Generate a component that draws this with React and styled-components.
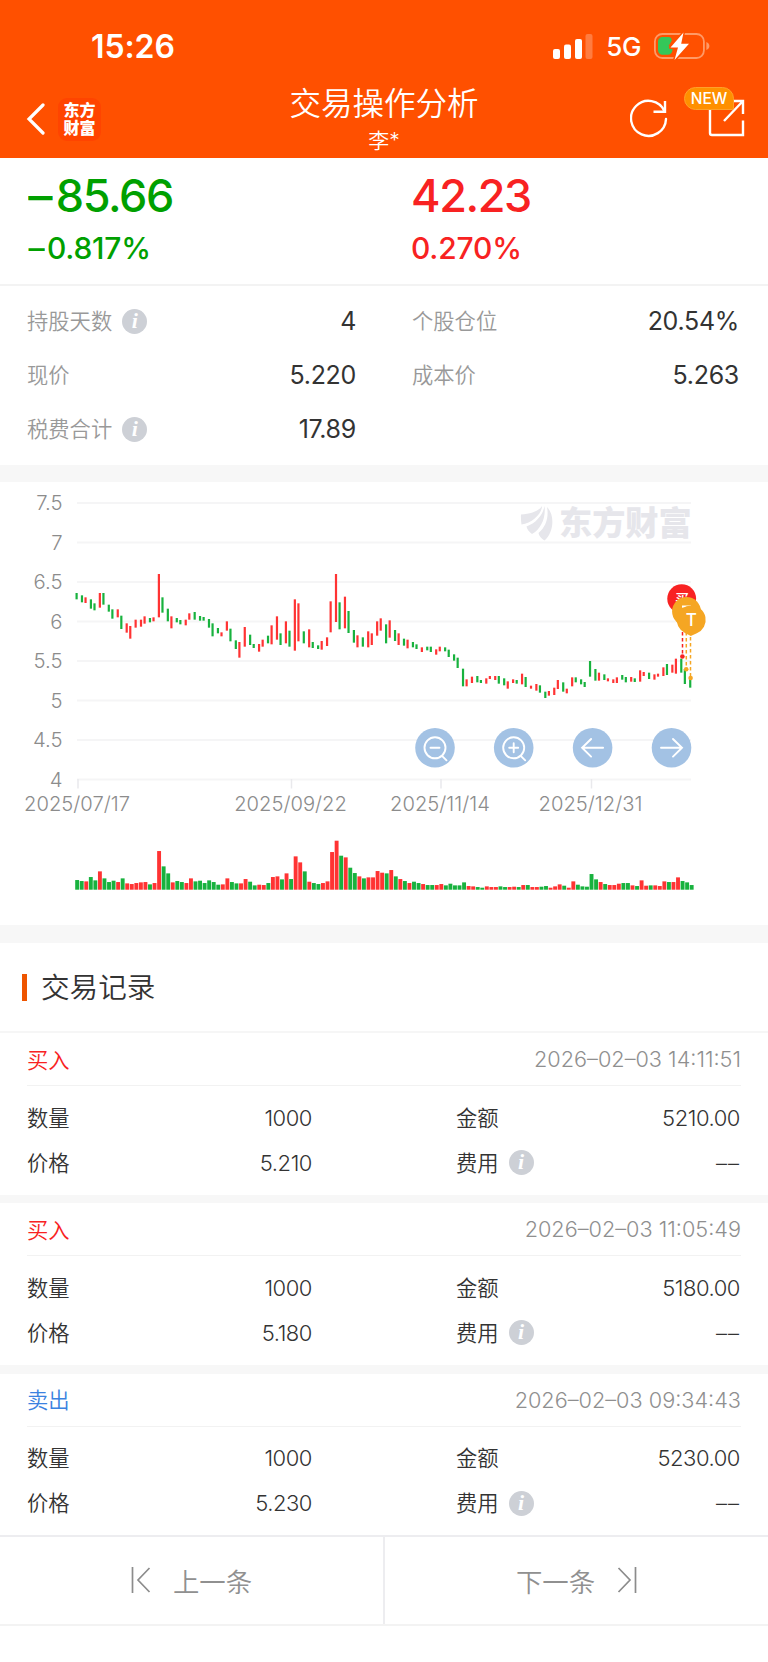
import React from 'react';
import styled, { createGlobalStyle } from 'styled-components';

const GlobalStyle = createGlobalStyle`
  * {
    box-sizing: border-box;
  }

  body {
    margin: 0;
    background: #fff;
    font-family: Inter, 'Noto Sans CJK SC', sans-serif;
    color: #333;
  }
`;

const Page = styled.div`
  width: 768px;
  height: 1662px;
  background: #fff;
  overflow: hidden;
`;

const Header = styled.header`
  height: 158px;
  background: #ff5000;
  color: #fff;
`;

const StatusBar = styled.div`
  height: 86px;
  padding: 6px 58px 0 91px;
  display: flex;
  align-items: center;
  justify-content: space-between;
`;

const Clock = styled.span`
  font-size: 32px;
  font-weight: 600;
  letter-spacing: -0.1px;
`;

const StatusIcons = styled.div`
  display: flex;
  align-items: center;
  gap: 13px;
`;

const Network = styled.span`
  font-size: 26px;
  font-weight: 500;
  letter-spacing: -0.4px;
  line-height: 30px;
  padding-top: 2px;
`;

const NavBar = styled.div`
  height: 72px;
  display: grid;
  grid-template-columns: 160px 1fr 160px;
`;

const NavLeft = styled.div`
  display: flex;
  align-items: center;
  gap: 13px;
  padding: 0 0 6px 26px;
`;

const AppBadge = styled.div`
  width: 43px;
  height: 43px;
  border-radius: 9px;
  background: #ff4400;
  display: flex;
  flex-wrap: wrap;
  align-content: center;
  justify-content: center;
  padding-bottom: 1px;
  font-size: 16px;
  font-weight: 900;
  line-height: 18px;
  text-align: center;
`;

const NavTitle = styled.div`
  display: flex;
  flex-direction: column;
  align-items: center;
`;

const Title = styled.h1`
  margin: 0;
  padding-top: 1px;
  font-size: 31.5px;
  font-weight: 350;
  line-height: 34px;
`;

const SubTitle = styled.div`
  font-size: 21px;
  font-weight: 350;
  line-height: 24px;
  margin-top: 8px;
`;

const NavRight = styled.div`
  display: flex;
  justify-content: flex-end;
  padding: 13px 23px 0 0;
  gap: 40px;
`;

const ShareButton = styled.div`
  position: relative;
`;

const NewBadge = styled.span`
  position: absolute;
  left: -24px;
  top: -12px;
  width: 50px;
  height: 23px;
  border-radius: 12px 12px 2px 12px;
  background: #ff9000;
  border: 1px solid #ffa02a;
  font-size: 15.5px;
  font-weight: 500;
  line-height: 22px;
  text-align: center;
`;

const ProfitPanel = styled.section`
  height: 126px;
  padding: 11px 0 0 27px;
  display: grid;
  grid-template-columns: 384px 1fr;
`;

const Profit = styled.div`
  color: ${props => (props.$up ? '#f82222' : '#00a000')};
  font-weight: 500;
`;

const Amount = styled.div`
  font-size: 45px;
  line-height: 54px;
  letter-spacing: -1.4px;
`;

const Percent = styled.div`
  font-size: 30px;
  line-height: 36px;
  margin-top: 7px;
  letter-spacing: -0.2px;
`;

const Minus = styled.span`
  display: inline-block;
  transform: scaleX(1.08);
  margin: 0 0.12em 0 0.05em;
`;

const StatPanel = styled.section`
  height: 181px;
  border-top: 2px solid #f3f3f3;
  padding: 8px 28px 0 27px;
  display: grid;
  grid-template-columns: 329px 327px;
  grid-auto-rows: 54px;
  column-gap: 56px;
`;

const StatItem = styled.div`
  display: flex;
  align-items: center;
  justify-content: space-between;
`;

const StatLabel = styled.div`
  display: flex;
  align-items: center;
  gap: 10px;
  font-size: 21.3px;
  font-weight: 350;
  line-height: 30px;
  color: #999;
`;

const StatValue = styled.span`
  font-size: 25px;
  font-weight: 370;
  letter-spacing: -0.3px;
`;

const InfoCircle = styled.span`
  width: 25px;
  height: 25px;
  border-radius: 50%;
  background: #cdd0d6;
  color: #fff;
  font: italic bold 22px/24px 'Liberation Serif', serif;
  text-align: center;
`;

const Band = styled.div`
  height: ${props => props.$size}px;
  background: #f7f7f7;
`;

const ChartPanel = styled.section`
  height: 443px;

  svg {
    display: block;
  }
`;

const AxisText = styled.text`
  font-size: ${props => props.$size || 20.3}px;
  font-weight: 300;
  fill: #8c8c8c;
`;

const Watermark = styled.text`
  font-family: 'Noto Sans CJK SC', sans-serif;
  font-size: 33.2px;
  font-weight: 900;
  fill: #e6e6eb;
`;

const MarkerText = styled.text`
  font-size: ${props => props.$size || 17}px;
  font-weight: 500;
  fill: #fff;
  text-anchor: middle;
`;

const RecordTitle = styled.h2`
  margin: 0;
  height: 90px;
  padding: 0 0 0 22px;
  border-bottom: 2px solid #f6f6f6;
  display: flex;
  align-items: center;
  gap: 14px;
  font-size: 28.6px;
  line-height: 40px;
  font-weight: 350;

  &::before {
    content: '';
    width: 5px;
    height: 27px;
    background: #ee5500;
  }

  span {
    padding-top: 1px;
  }
`;

const RecordCard = styled.article`
  height: 161.6px;
  padding: 0 27px;
`;

const RecordHead = styled.div`
  height: 53px;
  border-bottom: 1px solid #f2f2f2;
  display: flex;
  align-items: center;
  justify-content: space-between;
`;

const Side = styled.span`
  font-size: 21.3px;
  font-weight: 350;
  padding-bottom: 2px;
  color: ${props => (props.$buy ? '#f82222' : '#3b82e0')};
`;

const Time = styled.time`
  font-size: 21.7px;
  font-weight: 300;
  color: #8f8f8f;
`;

const RecordGrid = styled.div`
  padding-top: 9px;
  display: grid;
  grid-template-columns: 285px 284px;
  column-gap: 144px;
  grid-auto-rows: 45px;
`;

const RecordCell = styled.div`
  display: flex;
  align-items: center;
  justify-content: space-between;
`;

const RecordLabel = styled.div`
  display: flex;
  align-items: center;
  gap: 10px;
  font-size: 21.3px;
  font-weight: 350;
  line-height: 30px;
`;

const RecordValue = styled.span`
  font-size: 22px;
  font-weight: 360;
  letter-spacing: ${props => (props.$empty ? '1px' : '-0.45px')};
`;

const Pager = styled.footer`
  height: 91px;
  border-top: 2px solid #ededf0;
  border-bottom: 2px solid #f3f3f3;
  display: grid;
  grid-template-columns: 385px 1fr;
`;

const PagerButton = styled.button`
  border: none;
  border-right: ${props => (props.$divider ? '2px solid #ededf0' : 'none')};
  background: none;
  padding: 0 0 1px;
  font: inherit;
  font-size: 26.4px;
  font-weight: 350;
  color: #909090;
  display: flex;
  align-items: center;
  justify-content: center;
  gap: 22px;
`;

const stats = [
  { label: '持股天数', value: '4', info: true },
  { label: '个股仓位', value: '20.54%' },
  { label: '现价', value: '5.220' },
  { label: '成本价', value: '5.263' },
  { label: '税费合计', value: '17.89', info: true },
];

const records = [
  { side: '买入', buy: true, time: '2026–02–03 14:11:51', count: '1000', amount: '5210.00', price: '5.210' },
  { side: '买入', buy: true, time: '2026–02–03 11:05:49', count: '1000', amount: '5180.00', price: '5.180' },
  { side: '卖出', buy: false, time: '2026–02–03 09:34:43', count: '1000', amount: '5230.00', price: '5.230' },
];

const RED = '#ff3333';
const GREEN = '#18b23e';

// direction, high, low, volume; heights in thirds of a pixel
const candles = `
g 339 358 29,g 346 367 26,r 352 369 25,g 358 386 38,g 370 391 28,r 339 383 55,g 339 374 34,g 374 395 23,
g 388 416 27,r 388 412 23,g 407 447 34,r 430 458 19,r 438 476 17,r 419 443 20,r 419 440 22,r 409 431 23,
g 414 427 16,r 412 424 20,r 282 412 116,g 352 398 70,g 386 424 49,r 409 445 22,g 414 427 26,g 420 433 23,
r 419 436 20,r 400 419 34,g 396 419 25,g 408 422 27,g 411 422 20,g 417 443 28,g 430 469 23,g 444 460 15,
r 457 469 16,r 424 452 34,g 446 484 23,g 481 507 19,r 486 533 19,r 441 500 32,g 464 495 24,g 492 504 13,
r 492 515 15,r 479 500 14,g 467 490 20,r 436 493 38,r 409 479 40,g 460 495 31,r 424 490 49,g 452 500 32,
r 358 512 100,r 370 484 82,g 454 490 55,r 448 502 24,g 486 504 20,g 496 507 17,r 483 509 20,r 472 498 25,
r 364 457 113,r 282 426 147,g 367 448 102,r 350 445 97,g 393 459 66,g 450 488 50,r 466 502 40,g 472 500 34,
r 454 502 37,r 460 495 37,r 424 467 56,r 415 452 51,g 433 490 49,r 421 473 59,g 450 483 40,r 460 495 32,
g 476 497 26,r 479 505 20,g 486 502 24,g 493 507 20,r 502 516 17,g 500 511 14,g 500 516 14,r 508 524 14,
r 500 514 17,g 502 514 13,g 509 531 18,g 523 542 13,g 533 564 13,g 566 619 22,r 598 619 11,r 590 609 10,
g 588 607 8,g 600 609 6,r 595 611 10,r 588 597 8,r 588 600 8,g 588 611 10,g 595 616 8,r 604 626 8,
r 598 609 9,g 600 611 8,r 581 613 14,g 591 621 14,r 617 626 8,r 612 632 8,g 616 638 9,g 635 654 11,
r 633 647 6,r 623 645 10,r 600 627 16,g 607 635 12,r 626 640 6,r 592 619 25,g 592 607 15,g 598 613 10,
g 606 621 9,g 543 590 47,g 567 602 31,r 578 602 23,g 583 600 17,r 595 604 14,r 598 609 14,r 592 609 18,
g 585 599 20,g 591 607 20,r 591 605 13,g 595 606 11,r 571 605 28,r 576 588 12,g 578 597 13,r 583 599 13,
r 581 590 11,r 562 588 25,g 552 585 23,r 554 578 23,r 536 581 37,g 536 578 26,g 567 612 22,g 597 623 14`
  .split(',')
  .map(item => {
    const [dir, high, low, volume] = item.trim().split(' ');
    return { color: dir === 'r' ? RED : GREEN, high: high / 3, low: low / 3, volume: volume / 3 };
  });

const prices = ['7.5', '7', '6.5', '6', '5.5', '5', '4.5', '4'];

const dates = [
  { x: 78, label: '2025/07/17' },
  { x: 291.5, label: '2025/09/22' },
  { x: 441, label: '2025/11/14' },
  { x: 591.5, label: '2025/12/31' },
];

// candle centres sit on a 1.79px grid
const candleX = i => 76.6 + 1.789 * Math.round(i * 2.54 - 0.02);

const SignalIcon = () => (
  <svg width="40" height="26" viewBox="0 0 40 26" fill="#fff">
    <rect x="0" y="16" width="7" height="10" rx="2" />
    <rect x="11" y="11.5" width="7" height="14.5" rx="2" />
    <rect x="22" y="6" width="7" height="20" rx="2" />
    <rect x="32.5" y="1" width="7" height="25" rx="2" opacity="0.25" />
  </svg>
);

const BatteryIcon = () => (
  <svg width="56" height="28" viewBox="0 0 56 28">
    <rect x="0.9" y="2" width="49" height="24" rx="7.5" fill="none" stroke="#ff9a66" strokeWidth="1.8" />
    <path d="M52.4 10v8c1.8-.7 3-2.2 3-4s-1.2-3.3-3-4z" fill="#ff9a66" />
    <path d="M9 5h5.5c3 0 4 3 2.5 5l-2.5 4 3.5 1.5c1.5 3-.5 7.2-4 7.2H9c-3 0-5-2-5-5V10c0-3 2-5 5-5z" fill="#34c759" />
    <path d="M29.5 0.5 16.5 15.5h7.5L20.5 28 35 11.8h-7.8z" fill="#fff" stroke="#ff5000" strokeWidth="3" paintOrder="stroke" strokeLinejoin="round" />
  </svg>
);

const BackIcon = () => (
  <svg width="19" height="32" viewBox="0 0 19 32" fill="none" stroke="#fff" strokeWidth="3.2">
    <path d="M17 2 3 16l14 14" strokeLinecap="round" />
  </svg>
);

const RefreshIcon = () => (
  <svg width="38" height="40" viewBox="0 0 38 40" fill="none" stroke="#fff" strokeWidth="2.4">
    <path d="M34.5 12.2A17.5 17.5 0 1 0 36 20" strokeLinecap="round" />
    <path d="M35 2v10.8H23.5" />
  </svg>
);

const ShareIcon = () => (
  <svg width="37" height="38" viewBox="0 0 37 38" fill="none" stroke="#fff" strokeWidth="2.4">
    <path d="M2 8v26q0 2 2 2h31V21.5" />
    <path d="M21 2h14v13M35 2 16 22" />
  </svg>
);

const FirstIcon = () => (
  <svg width="20" height="26" viewBox="0 0 20 26" fill="none" stroke="#8c8c8c" strokeWidth="1.7">
    <path d="M1.5 0v26M18.5 1 7 13l11.5 12" />
  </svg>
);

const LastIcon = () => (
  <svg width="20" height="26" viewBox="0 0 20 26" fill="none" stroke="#8c8c8c" strokeWidth="1.7">
    <path d="M18.5 0v26M1.5 1 13 13 1.5 25" />
  </svg>
);

const ChartButton = ({ x, children }) => (
  <g transform={`translate(${x} 267.8)`} fill="none" stroke="#fff" strokeWidth="1.9" strokeLinecap="round">
    <circle r="19.8" fill="#a3c2e4" stroke="none" />
    {children}
  </g>
);

const StockChart = () => (
  <svg width="768" height="443" viewBox="0 2 768 443">
    {prices.map((price, i) => (
      <g key={price}>
        <line x1="77" x2="691" y1={23 + i * 39.5} y2={23 + i * 39.5} stroke="#f5f5f6" strokeWidth="2" />
        <AxisText x="62.5" y={30.4 + i * 39.5} textAnchor="end">{price}</AxisText>
      </g>
    ))}

    {dates.map(({ x, label }) => (
      <g key={label}>
        <line x1={x} x2={x} y1="299" y2="308.5" stroke="#e9e9ec" strokeWidth="1.5" />
        <AxisText x={x - 1} y="331.4" textAnchor="middle" $size={20.2}>{label}</AxisText>
      </g>
    ))}

    <g fill="#e6e6eb">
      <path d="M521 34.5C531 34 539 31 542 26C542 34 532 43 521.5 44.5C521 41 520.8 38 521 34.5z" />
      <path d="M544.5 26C546 38 541 49 532 54C529 52 527 49 526.5 46.5C536 43 543 35 544.5 26z" />
      <path d="M547 27C555 35 554 52 544.5 60.5C541.5 59 539 56 538.5 53C546 47 549 37 547 27z" />
    </g>
    <Watermark x="559" y="55.3">东方财富</Watermark>

    {candles.map((c, i) => (
      <g key={i} fill={c.color}>
        <rect x={candleX(i) - 1.1} y={c.high} width="2.2" height={c.low - c.high} />
        <rect x={75.2 + i * 4.552} y={409.7 - c.volume} width="3.9" height={c.volume} />
      </g>
    ))}

    <g strokeWidth="1.5" strokeDasharray="3.5 2.5">
      <line x1="682.5" x2="682.5" y1="152" y2="176" stroke="#f82222" />
      <line x1="686.3" x2="686.3" y1="152" y2="189" stroke="#f5a623" />
      <line x1="690.5" x2="690.5" y1="157" y2="198" stroke="#f5a623" />
    </g>
    <circle cx="682.4" cy="176.5" r="2.3" fill="#f82222" />
    <circle cx="686.2" cy="189.2" r="2.3" fill="#f5a623" />
    <circle cx="690.6" cy="198" r="2.3" fill="#f5a623" />

    <circle cx="681.7" cy="118.7" r="14.4" fill="#f82222" />
    <MarkerText x="682" y="123.5" $size={14}>买</MarkerText>
    <circle cx="686.5" cy="131.5" r="14.4" fill="#f5a623" />
    <path d="M682 125.5h9v.8l-4 .7-5 .8z" fill="#fff" />
    <path d="M691.3 125.5a14.4 14.4 0 0 1 5.5 27.7l-6 2.8-5.8-3.1a14.4 14.4 0 0 1 6.3-27.4z" fill="#f5a623" />
    <MarkerText x="691.2" y="146">T</MarkerText>

    <ChartButton x={435}>
      <circle r="10.5" />
      <path d="M-4.5 0h9M7.5 8.5l4 4" />
    </ChartButton>
    <ChartButton x={513.7}>
      <circle r="10.5" />
      <path d="M-4.5 0h9M0-4.5v9M7.5 8.5l4 4" />
    </ChartButton>
    <ChartButton x={592.6}>
      <path d="M10.5 0h-21M-1.5-8.8-10.5 0l9 8.8" />
    </ChartButton>
    <ChartButton x={671.5}>
      <path d="M-10.5 0h21M1.5-8.8 10.5 0l-9 8.8" />
    </ChartButton>
  </svg>
);

const Record = ({ record }) => (
  <RecordCard>
    <RecordHead>
      <Side $buy={record.buy}>{record.side}</Side>
      <Time>{record.time}</Time>
    </RecordHead>
    <RecordGrid>
      <RecordCell>
        <RecordLabel>数量</RecordLabel>
        <RecordValue>{record.count}</RecordValue>
      </RecordCell>
      <RecordCell>
        <RecordLabel>金额</RecordLabel>
        <RecordValue>{record.amount}</RecordValue>
      </RecordCell>
      <RecordCell>
        <RecordLabel>价格</RecordLabel>
        <RecordValue>{record.price}</RecordValue>
      </RecordCell>
      <RecordCell>
        <RecordLabel>
          费用
          <InfoCircle>i</InfoCircle>
        </RecordLabel>
        <RecordValue $empty>––</RecordValue>
      </RecordCell>
    </RecordGrid>
  </RecordCard>
);

const App = () => {
  return (
    <Page>
      <GlobalStyle />
      <Header>
        <StatusBar>
          <Clock>15:26</Clock>
          <StatusIcons>
            <SignalIcon />
            <Network>5G</Network>
            <BatteryIcon />
          </StatusIcons>
        </StatusBar>
        <NavBar>
          <NavLeft>
            <BackIcon />
            <AppBadge>
              <span>东方</span>
              <span>财富</span>
            </AppBadge>
          </NavLeft>
          <NavTitle>
            <Title>交易操作分析</Title>
            <SubTitle>李*</SubTitle>
          </NavTitle>
          <NavRight>
            <RefreshIcon />
            <ShareButton>
              <ShareIcon />
              <NewBadge>NEW</NewBadge>
            </ShareButton>
          </NavRight>
        </NavBar>
      </Header>

      <ProfitPanel>
        <Profit>
          <Amount><Minus>–</Minus>85.66</Amount>
          <Percent><Minus>–</Minus>0.817%</Percent>
        </Profit>
        <Profit $up>
          <Amount>42.23</Amount>
          <Percent>0.270%</Percent>
        </Profit>
      </ProfitPanel>

      <StatPanel>
        {stats.map(stat => (
          <StatItem key={stat.label}>
            <StatLabel>
              {stat.label}
              {stat.info && <InfoCircle>i</InfoCircle>}
            </StatLabel>
            <StatValue>{stat.value}</StatValue>
          </StatItem>
        ))}
      </StatPanel>

      <Band $size={17} />
      <ChartPanel>
        <StockChart />
      </ChartPanel>
      <Band $size={18} />

      <RecordTitle><span>交易记录</span></RecordTitle>
      {records.map((record, i) => (
        <React.Fragment key={record.time}>
          {i > 0 && <Band $size={8.7} />}
          <Record record={record} />
        </React.Fragment>
      ))}

      <Pager>
        <PagerButton $divider>
          <FirstIcon />
          上一条
        </PagerButton>
        <PagerButton>
          下一条
          <LastIcon />
        </PagerButton>
      </Pager>
    </Page>
  );
};

export default App;
